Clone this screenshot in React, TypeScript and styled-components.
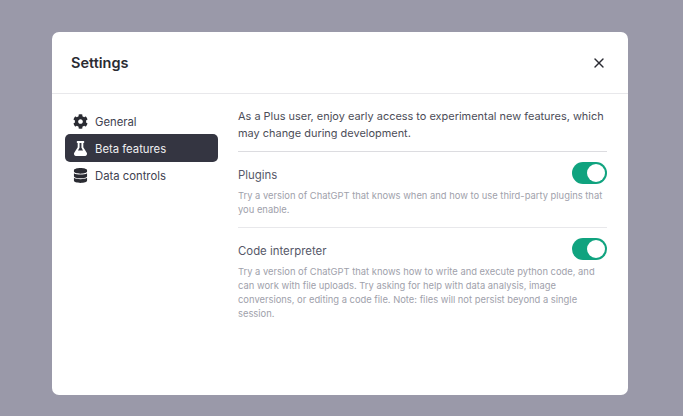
import React from "react";
import styled, { createGlobalStyle } from "styled-components";
import { FaCog, FaFlask, FaDatabase } from "react-icons/fa";
import { X } from "lucide-react";

const Global = createGlobalStyle`
  html, body { margin: 0; padding: 0; height: 100%; }
  body { background: #9a99a9; font-family: Inter, "Liberation Sans", sans-serif; overflow: hidden; }
`;

const Overlay = styled.div`
  width: 683px;
  height: 416px;
  box-sizing: border-box;
  padding: 32px 55px 21px 52px;
  background: #9a99a9;
`;

const Dialog = styled.div`
  height: 363px;
  background: #fff;
  border-radius: 7px;
  display: flex;
  flex-direction: column;
  color: #343541;
`;

const Header = styled.header`
  height: 62px;
  flex: none;
  box-sizing: border-box;
  padding: 0 21px 0 19px;
  display: flex;
  align-items: center;
  justify-content: space-between;
  border-bottom: 1px solid #e8e8eb;
`;

const Title = styled.h2`
  margin: 0;
  font-size: 14.5px;
  font-weight: 600;
  color: #2a2b32;
`;

const CloseButton = styled.button`
  width: 16px;
  height: 16px;
  padding: 0;
  border: 0;
  background: none;
  color: #2a2b32;
  display: flex;
  align-items: center;
  justify-content: center;
`;

const Body = styled.div`
  flex: 1;
  display: flex;
  gap: 20px;
  padding: 14px 21px 0 13px;
`;

const Sidebar = styled.nav`
  width: 153px;
  flex: none;
  display: flex;
  flex-direction: column;
  margin-top: -1px;
`;

const NavItem = styled.div<{ $active?: boolean }>`
  height: 28px;
  margin-bottom: -1px;
  box-sizing: border-box;
  padding-left: 8px;
  display: flex;
  align-items: center;
  gap: 7px;
  border-radius: 5px;
  font-size: 11.3px;
  background: ${(p) => (p.$active ? "#343541" : "transparent")};
  color: ${(p) => (p.$active ? "#f0f0f2" : "#40414f")};
  svg { width: 15px; height: 15px; flex: none; color: ${(p) => (p.$active ? "#fff" : "#2a2b32")}; }
`;

const NavLabel = styled.span`
  padding-top: 2px;
`;

const Content = styled.main`
  flex: 1;
  min-width: 0;
  display: flex;
  flex-direction: column;
`;

const Intro = styled.p`
  margin: 0;
  padding: 0 0 9px;
  font-size: 10.95px;
  line-height: 17px;
  color: #4c4d58;
  border-bottom: 1px solid #dcdce0;
`;

const Feature = styled.section`
  padding: 10px 0 10px;
  & + & { border-top: 1px solid #e8e8eb; }
`;

const FeatureRow = styled.div`
  height: 22px;
  display: flex;
  align-items: center;
  justify-content: space-between;
  margin-bottom: 5px;
`;

const FeatureName = styled.span`
  padding-top: 3px;
  font-size: 11.4px;
  color: #565869;
`;

const Toggle = styled.span`
  width: 35px;
  height: 22px;
  box-sizing: border-box;
  padding: 2px;
  border-radius: 11px;
  background: #10a37f;
  display: flex;
  justify-content: flex-end;
`;

const Knob = styled.span`
  width: 18px;
  height: 18px;
  border-radius: 50%;
  background: #fff;
`;

const Description = styled.p`
  margin: 0;
  font-size: 9.4px;
  line-height: 14px;
  color: #a0a1ab;
`;

const features = [
  {
    name: "Plugins",
    text: "Try a version of ChatGPT that knows when and how to use third-party plugins that you enable.",
  },
  {
    name: "Code interpreter",
    text: "Try a version of ChatGPT that knows how to write and execute python code, and can work with file uploads. Try asking for help with data analysis, image conversions, or editing a code file. Note: files will not persist beyond a single session.",
  },
];

export default function App() {
  return (
    <>
      <Global />
      <Overlay>
        <Dialog>
          <Header>
            <Title>Settings</Title>
            <CloseButton aria-label="Close">
              <X size={16} strokeWidth={2} />
            </CloseButton>
          </Header>
          <Body>
            <Sidebar>
              <NavItem><FaCog /><NavLabel>General</NavLabel></NavItem>
              <NavItem $active><FaFlask /><NavLabel>Beta features</NavLabel></NavItem>
              <NavItem><FaDatabase /><NavLabel>Data controls</NavLabel></NavItem>
            </Sidebar>
            <Content>
              <Intro>
                As a Plus user, enjoy early access to experimental new features, which may change during development.
              </Intro>
              {features.map((f) => (
                <Feature key={f.name}>
                  <FeatureRow>
                    <FeatureName>{f.name}</FeatureName>
                    <Toggle><Knob /></Toggle>
                  </FeatureRow>
                  <Description>{f.text}</Description>
                </Feature>
              ))}
            </Content>
          </Body>
        </Dialog>
      </Overlay>
    </>
  );
}
